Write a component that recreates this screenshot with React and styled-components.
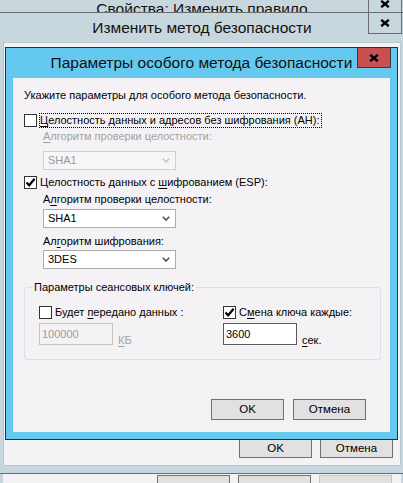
import React from 'react'
import styled, { createGlobalStyle } from 'styled-components'

const GlobalStyle = createGlobalStyle`
  html, body {
    margin: 0;
    padding: 0;
  }
  body {
    font-family: 'Liberation Sans', Arial, sans-serif;
    font-size: 11px;
    color: #000;
  }
`

const Desktop = styled.div`
  position: relative;
  width: 403px;
  height: 483px;
  overflow: hidden;
  background: #f5f2f5;
`

// windows on the desktop are stacked on top of each other
const Window = styled.div`
  position: absolute;
  left: ${(p) => p.$left}px;
  top: ${(p) => p.$top}px;
  width: ${(p) => p.$w}px;
  height: ${(p) => p.$h}px;
  box-sizing: border-box;
  display: flex;
  flex-direction: column;
  padding: 0 7px 7px;
  border: 1px solid ${(p) => (p.$active ? '#2e2e2e' : '#6c6c6c')};
  background: ${(p) => (p.$active ? '#65c9ef' : '#c8d7dd')};
`

const TitleBar = styled.div`
  position: relative;
  height: ${(p) => p.$h}px;
  flex-shrink: 0;
  display: flex;
  align-items: center;
  justify-content: center;
  font-size: 15.5px;
  color: #111;
  white-space: nowrap;
`

const CloseButton = styled.div`
  position: absolute;
  top: 0;
  right: -1px;
  width: 34px;
  height: ${(p) => p.$h}px;
  box-sizing: border-box;
  display: flex;
  align-items: center;
  justify-content: center;
  border: 1px solid ${(p) => (p.$active ? '#3a3a3a' : '#6c6c6c')};
  border-top: none;
  background: ${(p) => (p.$active ? '#c75050' : 'transparent')};
`

const Client = styled.div`
  flex: 1;
  display: flex;
  flex-direction: column;
  box-sizing: border-box;
  background: #f5f2f5;
  border: ${(p) => (p.$edge ? '1px solid #b9c6cc' : 'none')};
  padding: ${(p) => p.$pad || '0'};
`

const ButtonRow = styled.div`
  display: flex;
  justify-content: flex-end;
  gap: ${(p) => p.$gap || 8}px;
  margin-top: ${(p) => (p.$top ? '0' : 'auto')};
  padding: ${(p) => p.$pad || '0'};
`

const Button = styled.div`
  width: ${(p) => p.$w || 73}px;
  height: 21px;
  box-sizing: border-box;
  display: flex;
  align-items: center;
  justify-content: center;
  background: #e1e1e1;
  border: 1px solid ${(p) => (p.$default ? '#3c7fb1' : p.$disabled ? '#c4c4c4' : '#707070')};
  color: ${(p) => (p.$disabled ? '#a0a0a0' : '#000')};
  font-size: 11.5px;
`

const Content = styled.div`
  flex: 1;
  display: flex;
  flex-direction: column;
  padding: 10px 11px 0;
  line-height: 15px;
`

const Text = styled.div`
  margin-top: ${(p) => p.$mt || 0}px;
  color: ${(p) => (p.$disabled ? '#a2a2a2' : '#000')};
  white-space: nowrap;
  u {
    text-underline-offset: 2px;
  }
`

const CheckRow = styled.div`
  display: flex;
  align-items: center;
  gap: 2px;
  height: 15px;
  margin-top: ${(p) => p.$mt || 0}px;
  white-space: nowrap;
  u {
    text-underline-offset: 2px;
  }
`

const Box = styled.div`
  width: 13px;
  height: 13px;
  box-sizing: border-box;
  flex-shrink: 0;
  border: 1px solid #333;
  background: #fff;
  display: flex;
  align-items: center;
  justify-content: center;
`

const CheckLabel = styled.span`
  line-height: 13px;
  padding-right: 1px;
  border: 1px dotted ${(p) => (p.$focus ? '#000' : 'transparent')};
`

const Indent = styled.div`
  display: flex;
  flex-direction: column;
  align-items: flex-start;
  margin-left: 19px;
`

const Combo = styled.div`
  width: 133px;
  height: 19px;
  box-sizing: border-box;
  margin-top: ${(p) => p.$mt || 0}px;
  display: flex;
  align-items: center;
  justify-content: space-between;
  padding: 0 5px 0 4px;
  border: 1px solid ${(p) => (p.$disabled ? '#cfcfcf' : '#acacac')};
  background: ${(p) => (p.$disabled ? '#f7f5f7' : '#fff')};
  color: ${(p) => (p.$disabled ? '#9a9a9a' : '#000')};
`

const Group = styled.fieldset`
  width: 357px;
  box-sizing: border-box;
  margin: 11px 0 0;
  padding: 0;
  border: 1px solid #dcdfe3;
  border-radius: 3px;
  min-width: 0;
`

const Legend = styled.legend`
  margin-left: 7px;
  padding: 0 2px;
  line-height: 15px;
`

const GroupBody = styled.div`
  display: grid;
  grid-template-columns: 184px 1fr;
  padding: 10px 0 14px 14px;
`

const Column = styled.div`
  display: flex;
  flex-direction: column;
`

const FieldRow = styled.div`
  display: flex;
  align-items: flex-end;
  gap: 5px;
  margin-top: 3px;
`

const TextBox = styled.div`
  width: 74px;
  height: 22px;
  box-sizing: border-box;
  padding: 3px 2px 0;
  border: 1px solid ${(p) => (p.$disabled ? '#c4c4c4' : '#5a5a5a')};
  background: ${(p) => (p.$disabled ? '#f5f2f5' : '#fff')};
  color: ${(p) => (p.$disabled ? '#9a9a9a' : '#000')};
`

const Unit = styled.span`
  margin-bottom: -3px;
  color: ${(p) => (p.$disabled ? '#a2a2a2' : '#000')};
  u {
    text-underline-offset: 2px;
  }
`

const CloseGlyph = () => (
  <svg width="10" height="8" viewBox="0 0 10 8">
    <path d="M1.2 0.8 L8.8 7.2 M8.8 0.8 L1.2 7.2" stroke="#000" strokeWidth="2.4" fill="none" />
  </svg>
)

const CheckMark = () => (
  <svg width="11" height="11" viewBox="0 0 11 11">
    <path d="M1.5 5.5 L4.2 8.3 L9.6 1.8" stroke="#000" strokeWidth="2.2" fill="none" />
  </svg>
)

const Chevron = ({ disabled }) => (
  <svg width="8" height="5" viewBox="0 0 8 5">
    <path d="M0.8 0.8 L4 4 L7.2 0.8" stroke={disabled ? '#c4c4c4' : '#505050'} strokeWidth="1.6" fill="none" />
  </svg>
)

function CheckBox({ checked, focus, children }) {
  return (
    <CheckRow>
      <Box>{checked && <CheckMark />}</Box>
      <CheckLabel $focus={focus}>{children}</CheckLabel>
    </CheckRow>
  )
}

export default function App() {
  return (
    <>
      <GlobalStyle />
      <Desktop>
        {/* Свойства — самое нижнее окно, видны только заголовок и верх кнопок */}
        <Window $left={-5} $top={-7} $w={414} $h={520}>
          <TitleBar $h={30}>
            Свойства: Изменить правило
            <CloseButton $h={21}>
              <CloseGlyph />
            </CloseButton>
          </TitleBar>
          <Client>
            <ButtonRow $top $pad="451px 9px 0 0">
              <Button />
              <Button />
              <Button $disabled />
            </ButtonRow>
          </Client>
        </Window>

        {/* Изменить метод безопасности */}
        <Window $left={-5} $top={12} $w={414} $h={462}>
          <TitleBar $h={29}>
            Изменить метод безопасности
            <CloseButton $h={21}>
              <CloseGlyph />
            </CloseButton>
          </TitleBar>
          <Client $edge>
            <ButtonRow $pad="0 7px 7px 0">
              <Button>OK</Button>
              <Button>Отмена</Button>
            </ButtonRow>
          </Client>
        </Window>

        {/* Параметры особого метода безопасности */}
        <Window $left={5} $top={47} $w={393} $h={393} $active>
          <TitleBar $h={30}>
            Параметры особого метода безопасности
            <CloseButton $h={20} $active>
              <CloseGlyph />
            </CloseButton>
          </TitleBar>
          <Client>
            <Content>
              <Text>Укажите параметры для особого метода безопасности.</Text>
              <CheckRow $mt={10}>
                <Box />
                <CheckLabel $focus>
                  <u>Ц</u>елостность данных и адресов без шифрования (AH):
                </CheckLabel>
              </CheckRow>
              <Indent>
                <Text $mt={1} $disabled>
                  <u>А</u>лгоритм проверки целостности:
                </Text>
                <Combo $mt={7} $disabled>
                  SHA1
                  <Chevron disabled />
                </Combo>
              </Indent>
              <CheckRow $mt={5}>
                <Box>
                  <CheckMark />
                </Box>
                <CheckLabel>
                  Целостность данных с <u>ш</u>ифрованием (ESP):
                </CheckLabel>
              </CheckRow>
              <Indent>
                <Text $mt={2}>
                  А<u>л</u>горитм проверки целостности:
                </Text>
                <Combo $mt={2}>
                  SHA1
                  <Chevron />
                </Combo>
                <Text $mt={6}>
                  Ал<u>г</u>оритм шифрования:
                </Text>
                <Combo $mt={1}>
                  3DES
                  <Chevron />
                </Combo>
              </Indent>

              <Group>
                <Legend>Параметры сеансовых ключей:</Legend>
                <GroupBody>
                  <Column>
                    <CheckBox>
                      Будет <u>п</u>ередано данных :
                    </CheckBox>
                    <FieldRow>
                      <TextBox $disabled>100000</TextBox>
                      <Unit $disabled>
                        <u>К</u>Б
                      </Unit>
                    </FieldRow>
                  </Column>
                  <Column>
                    <CheckBox checked>
                      С<u>м</u>ена ключа каждые:
                    </CheckBox>
                    <FieldRow>
                      <TextBox>3600</TextBox>
                      <Unit>
                        <u>с</u>ек.
                      </Unit>
                    </FieldRow>
                  </Column>
                </GroupBody>
              </Group>

              <ButtonRow $gap={9} $pad="0 13px 12px 0">
                <Button $default>OK</Button>
                <Button>Отмена</Button>
              </ButtonRow>
            </Content>
          </Client>
        </Window>
      </Desktop>
    </>
  )
}
